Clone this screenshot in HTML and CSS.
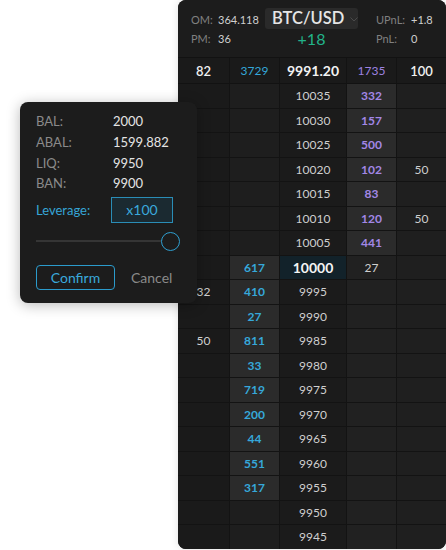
FILE: index.html
```html
<!DOCTYPE html>
<html>
<head>
<meta charset="utf-8">
<link rel="stylesheet" href="styles.css">
</head>
<body>
<div class="stage">
  <div class="panel">
    <div class="header">
      <div class="stats">
        <span class="lbl">OM:</span><span class="val">364.118</span>
        <span class="lbl">PM:</span><span class="val">36</span>
      </div>
      <div class="center">
        <div class="pair"><span class="pairtxt">BTC/USD</span><svg class="chev" width="8" height="5" viewBox="0 0 8 5"><path d="M0.5 0.5 L4 4 L7.5 0.5" fill="none" stroke="#4a4a4a" stroke-width="1"/></svg></div>
        <div class="delta">+18</div>
      </div>
      <div class="stats right">
        <span class="lbl">UPnL:</span><span class="val">+1.8</span>
        <span class="lbl">PnL:</span><span class="val">0</span>
      </div>
    </div>
    <div class="toprow">
      <div class="c c1 tw">82</div>
      <div class="c c2 tb">3729</div>
      <div class="c c3 tp">9991.20</div>
      <div class="c c4 tu">1735</div>
      <div class="c c5 tw">100</div>
    </div>
    <div class="book">
      <div class="c c1"></div><div class="c c2"></div><div class="c c3">10035</div><div class="c c4 ask">332</div><div class="c c5"></div>
      <div class="c c1"></div><div class="c c2"></div><div class="c c3">10030</div><div class="c c4 ask">157</div><div class="c c5"></div>
      <div class="c c1"></div><div class="c c2"></div><div class="c c3">10025</div><div class="c c4 ask">500</div><div class="c c5"></div>
      <div class="c c1"></div><div class="c c2"></div><div class="c c3">10020</div><div class="c c4 ask">102</div><div class="c c5">50</div>
      <div class="c c1"></div><div class="c c2"></div><div class="c c3">10015</div><div class="c c4 ask">83</div><div class="c c5"></div>
      <div class="c c1"></div><div class="c c2"></div><div class="c c3">10010</div><div class="c c4 ask">120</div><div class="c c5">50</div>
      <div class="c c1"></div><div class="c c2"></div><div class="c c3">10005</div><div class="c c4 ask">441</div><div class="c c5"></div>
      <div class="c c1"></div><div class="c c2 bid">617</div><div class="c c3 mid">10000</div><div class="c c4">27</div><div class="c c5"></div>
      <div class="c c1">32</div><div class="c c2 bid">410</div><div class="c c3">9995</div><div class="c c4"></div><div class="c c5"></div>
      <div class="c c1"></div><div class="c c2 bid">27</div><div class="c c3">9990</div><div class="c c4"></div><div class="c c5"></div>
      <div class="c c1">50</div><div class="c c2 bid">811</div><div class="c c3">9985</div><div class="c c4"></div><div class="c c5"></div>
      <div class="c c1"></div><div class="c c2 bid">33</div><div class="c c3">9980</div><div class="c c4"></div><div class="c c5"></div>
      <div class="c c1"></div><div class="c c2 bid">719</div><div class="c c3">9975</div><div class="c c4"></div><div class="c c5"></div>
      <div class="c c1"></div><div class="c c2 bid">200</div><div class="c c3">9970</div><div class="c c4"></div><div class="c c5"></div>
      <div class="c c1"></div><div class="c c2 bid">44</div><div class="c c3">9965</div><div class="c c4"></div><div class="c c5"></div>
      <div class="c c1"></div><div class="c c2 bid">551</div><div class="c c3">9960</div><div class="c c4"></div><div class="c c5"></div>
      <div class="c c1"></div><div class="c c2 bid">317</div><div class="c c3">9955</div><div class="c c4"></div><div class="c c5"></div>
      <div class="c c1"></div><div class="c c2"></div><div class="c c3">9950</div><div class="c c4"></div><div class="c c5"></div>
      <div class="c c1"></div><div class="c c2"></div><div class="c c3">9945</div><div class="c c4"></div><div class="c c5"></div>
    </div>
  </div>

  <div class="popup">
    <div class="info">
      <span class="plbl">BAL:</span><span class="pval">2000</span>
      <span class="plbl">ABAL:</span><span class="pval">1599.882</span>
      <span class="plbl">LIQ:</span><span class="pval">9950</span>
      <span class="plbl">BAN:</span><span class="pval">9900</span>
    </div>
    <div class="lev">
      <span class="levlbl">Leverage:</span>
      <div class="levbox">x100</div>
    </div>
    <div class="slider">
      <div class="track"></div>
      <div class="thumb"></div>
    </div>
    <div class="actions">
      <div class="confirm">Confirm</div>
      <div class="cancel">Cancel</div>
    </div>
  </div>
</div>
</body>
</html>
```

FILE: styles.css
```css
* { box-sizing: border-box; }
html, body { margin: 0; padding: 0; background: #ffffff; }
body { font-family: Lato, "Open Sans", sans-serif; }

.stage {
  position: relative;
  width: 446px;
  height: 550px;
  padding-left: 178px;
}

.panel {
  width: 268px;
  height: 549px;
  background: #131313;
  border-radius: 8px;
  overflow: hidden;
  box-shadow: 0 0 8px rgba(0,0,0,0.12);
}

.header {
  height: 58px;
  background: #1c1c1c;
  border-bottom: 1px solid #121212;
  display: flex;
  align-items: flex-start;
  padding: 10px 0 0 13px;
}

.stats {
  display: grid;
  grid-template-columns: 27px auto;
  grid-auto-rows: 19px;
  width: 74px;
  font-size: 11px;
  align-items: center;
}
.stats.right {
  grid-template-columns: 35px auto;
  margin-left: 18px;
  width: auto;
}
.lbl { color: #808080; }
.val { color: #cfcfcf; }

.center {
  width: 93px;
  display: flex;
  flex-direction: column;
  align-items: stretch;
  margin-top: -2px;
}
.pair {
  height: 21px;
  background: #2a2a2a;
  border-radius: 3px;
  display: flex;
  align-items: center;
  padding-left: 7px;
  overflow: hidden;
}
.pairtxt {
  color: #e6e6e6;
  font-size: 16.5px;
  font-weight: 600;
  line-height: 21px;
}
.chev { margin-left: 6px; margin-top: 1px; flex: none; }
.delta {
  text-align: center;
  color: #22b38a;
  font-size: 16px;
  line-height: 19px;
}

.toprow, .book {
  display: grid;
  grid-template-columns: 51px 49px 66px 49px 49px;
  column-gap: 1px;
}
.toprow {
  height: 26px;
  border-bottom: 1px solid #121212;
}
.toprow .c { background: #1a1a1a; }
.book {
  row-gap: 1px;
  grid-auto-rows: 23.5px;
}

.c {
  display: flex;
  align-items: center;
  justify-content: center;
  font-size: 12px;
  color: #cfcfcf;
}
.book .c1 { background: #1a1a1a; }
.book .c2 { background: #1e1e1e; }
.book .c3 { background: #1b1b1b; }
.book .c4 { background: #212121; }
.book .c5 { background: #1f1f1f; }

.tw { color: #f0f0f0; font-size: 13px; font-weight: 600; }
.tb { color: #34a6d8; font-size: 12px; }
.tp { color: #f2f2f2; font-size: 14px; font-weight: 700; }
.tu { color: #9d82e0; font-size: 12px; }

.book .ask { background: #2b2b2b; color: #a287e6; font-weight: 700; }
.book .bid { background: #2b2b2b; color: #36a8da; font-weight: 700; }
.book .mid { background: #12222a; color: #f4f4f4; font-size: 14px; font-weight: 700; }

/* popup */
.popup {
  position: absolute;
  left: 20px;
  top: 102px;
  width: 177px;
  height: 201px;
  background: #1c1c1c;
  border-radius: 8px;
  box-shadow: 0 2px 14px rgba(0,0,0,0.28);
  padding: 9px 16px 0 16px;
}
.info {
  display: grid;
  grid-template-columns: 77px auto;
  grid-auto-rows: 20.7px;
  align-items: center;
  font-size: 13px;
}
.plbl { color: #8a8a8a; }
.pval { color: #e4e4e4; }

.lev {
  display: flex;
  align-items: center;
  margin-top: 3px;
  height: 26px;
}
.levlbl {
  width: 75px;
  color: #36a5d6;
  font-size: 13px;
}
.levbox {
  width: 62px;
  height: 26px;
  border: 1px solid #2a8db6;
  background: #1b2a31;
  color: #3aa9db;
  font-size: 14px;
  display: flex;
  align-items: center;
  justify-content: center;
}

.slider {
  position: relative;
  margin-top: 9px;
  height: 19px;
  display: flex;
  align-items: center;
}
.track {
  width: 130px;
  height: 2px;
  background: #353535;
}
.thumb {
  position: absolute;
  left: 125px;
  top: 0;
  width: 19px;
  height: 19px;
  border-radius: 50%;
  border: 1.5px solid #2f9fd0;
  background: #1c1c1c;
}

.actions {
  display: flex;
  align-items: center;
  margin-top: 14px;
}
.confirm {
  width: 79px;
  height: 25.5px;
  border: 1.5px solid #2b9bcc;
  border-radius: 4px;
  color: #3aa9db;
  font-size: 14px;
  display: flex;
  align-items: center;
  justify-content: center;
}
.cancel {
  margin-left: 16px;
  color: #8a8a8a;
  font-size: 14px;
}
```
